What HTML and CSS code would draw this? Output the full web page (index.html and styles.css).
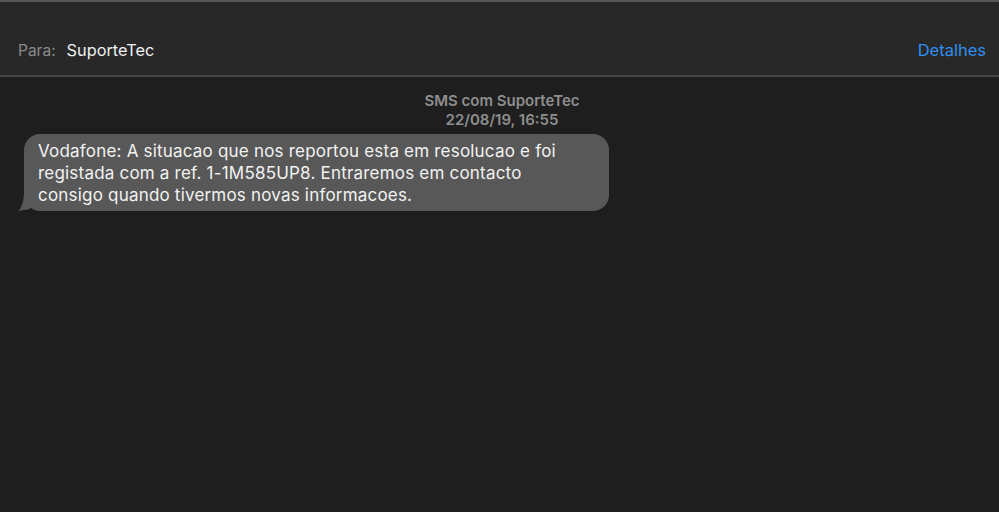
FILE: index.html
```html
<!DOCTYPE html>
<html lang="pt">
<head>
<meta charset="utf-8">
<link rel="stylesheet" href="styles.css">
</head>
<body>
<div class="app">
  <header class="header">
    <div class="to">
      <span class="label">Para:</span>
      <span class="name">SuporteTec</span>
    </div>
    <a class="details">Detalhes</a>
  </header>
  <main class="thread">
    <div class="meta">
      <div class="service">SMS com SuporteTec</div>
      <div class="time">22/08/19, 16:55</div>
    </div>
    <div class="row">
      <div class="bubble">
        Vodafone: A situacao que nos reportou esta em resolucao e foi registada com a ref. 1-1M585UP8. Entraremos em contacto consigo quando tivermos novas informacoes.
        <svg class="tail" width="14" height="16" viewBox="0 0 14 16"><path d="M12 0 L12 14 Q7 15 0 16 Q5 12 6 0 Z" fill="#585858"/></svg>
      </div>
    </div>
  </main>
</div>
</body>
</html>
```
FILE: styles.css
```css
* { box-sizing: border-box; }
html, body { margin: 0; padding: 0; }
body {
  width: 999px;
  height: 512px;
  overflow: hidden;
  background: #1e1e1e;
  font-family: Inter, "Liberation Sans", sans-serif;
  -webkit-font-smoothing: antialiased;
}
.app { display: flex; flex-direction: column; height: 512px; }
.header {
  height: 77px;
  background: #282828;
  border-top: 2px solid #565656;
  border-bottom: 2px solid #464646;
  display: flex;
  align-items: flex-end;
  justify-content: space-between;
  padding: 0 13px 15px 18px;
}
.to { display: flex; align-items: baseline; gap: 11px; }
.label { color: #8c8c8c; font-size: 15.5px; }
.name { color: #f0f0f0; font-size: 16.3px; }
.details { color: #2f8ff0; font-size: 16.5px; }
.thread { flex: 1; padding-top: 14px; }
.meta {
  text-align: center;
  color: #8e8e8e;
  font-size: 15px;
  font-weight: 600;
  line-height: 19px;
  padding-left: 5px;
}
.row { padding: 5px 0 0 24px; }
.bubble {
  position: relative;
  width: 585px;
  background: #585858;
  color: #f2f2f2;
  border-radius: 16px;
  padding: 6px 41px 1px 14px;
  font-size: 17px;
  letter-spacing: 0.2px;
  line-height: 22px;
  min-height: 77px;
}
.tail { position: absolute; left: -6px; bottom: 0; }
```
